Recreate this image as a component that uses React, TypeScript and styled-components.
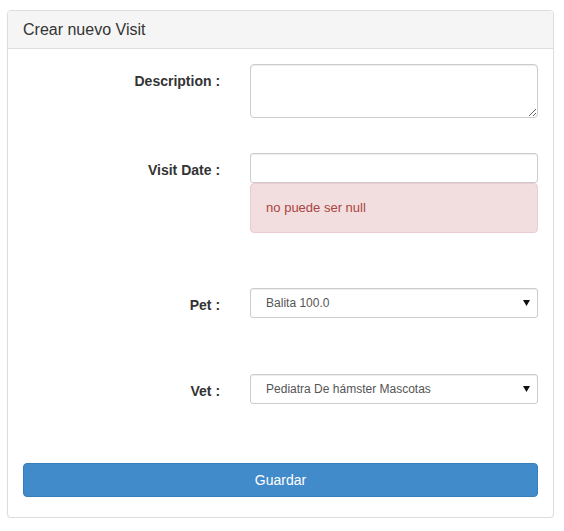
import React from "react";
import styled, { createGlobalStyle } from "styled-components";

const GlobalStyle = createGlobalStyle`
  html, body {
    margin: 0;
    padding: 0;
    background: #ffffff;
  }
  body {
    font-family: "Liberation Sans", Arial, Helvetica, sans-serif;
    font-size: 14px;
    line-height: 1.42857143;
    color: #333333;
  }
  * { box-sizing: border-box; }
`;

const Page = styled.div`
  padding: 10px 0 0 7px;
`;

const Panel = styled.div`
  width: 547px;
  background: #fff;
  border: 1px solid #dddddd;
  border-radius: 4px;
  box-shadow: 0 1px 1px rgba(0, 0, 0, 0.05);
`;

const PanelHeading = styled.div`
  padding: 10px 15px;
  background: #f5f5f5;
  border-bottom: 1px solid #dddddd;
  border-top-left-radius: 3px;
  border-top-right-radius: 3px;
`;

const PanelTitle = styled.h3`
  margin: 0;
  font-size: 16px;
  font-weight: 400;
  line-height: 17px;
  color: #333333;
`;

const PanelBody = styled.form`
  padding: 15px;
`;

const FormRow = styled.div<{ $space: number }>`
  display: grid;
  grid-template-columns: 41.6667% 58.3333%;
  margin: 0 -15px ${(p) => p.$space}px;
`;

const Label = styled.label`
  padding: 7px 15px 0;
  text-align: right;
  font-weight: 700;
  font-size: 14px;
  line-height: 20px;
  color: #333333;
`;

const Control = styled.div`
  padding: 0 15px;
  display: flex;
  flex-direction: column;
`;

const TextArea = styled.textarea`
  display: block;
  width: 100%;
  height: 54px;
  padding: 6px 12px;
  font-family: inherit;
  font-size: 14px;
  line-height: 20px;
  color: #555555;
  background: #fff;
  border: 1px solid #cccccc;
  border-radius: 4px;
  box-shadow: inset 0 1px 1px rgba(0, 0, 0, 0.075);
  resize: vertical;
  outline: none;
`;

const SmallInput = styled.input`
  display: block;
  width: 100%;
  height: 30px;
  padding: 5px 10px;
  font-family: inherit;
  font-size: 12px;
  line-height: 1.5;
  color: #555555;
  background: #fff;
  border: 1px solid #cccccc;
  border-radius: 3px;
  box-shadow: inset 0 1px 1px rgba(0, 0, 0, 0.075);
  outline: none;
`;

const Alert = styled.div`
  height: 50px;
  padding: 15px;
  font-size: 13px;
  line-height: 18px;
  color: #a94442;
  background: #f2dede;
  border: 1px solid #ebccd1;
  border-radius: 4px;
`;

const SelectWrap = styled.div`
  position: relative;
`;

const Select = styled.select`
  display: block;
  width: 100%;
  height: 30px;
  padding: 0 24px 0 15px;
  font-family: inherit;
  font-size: 12px;
  line-height: 28px;
  color: #555555;
  background: #fff;
  border: 1px solid #cccccc;
  border-radius: 3px;
  box-shadow: inset 0 1px 1px rgba(0, 0, 0, 0.075);
  appearance: none;
  -webkit-appearance: none;
  outline: none;
`;

const Caret = styled.svg`
  position: absolute;
  right: 8px;
  top: 12px;
  width: 7px;
  height: 6px;
  pointer-events: none;
`;

const SubmitButton = styled.button`
  display: block;
  width: 100%;
  height: 34px;
  margin-bottom: 5px;
  padding: 6px 12px;
  font-family: inherit;
  font-size: 14px;
  line-height: 20px;
  color: #ffffff;
  background: #428bca;
  border: 1px solid #357ebd;
  border-radius: 4px;
  cursor: pointer;
`;

const SelectField: React.FC<{ value: string }> = ({ value }) => (
  <SelectWrap>
    <Select defaultValue={value}>
      <option value={value}>{value}</option>
    </Select>
    <Caret viewBox="0 0 7 6">
      <polygon points="0,0 7,0 3.5,6" fill="#111" />
    </Caret>
  </SelectWrap>
);

export default function App() {
  return (
    <>
      <GlobalStyle />
      <Page>
        <Panel>
          <PanelHeading>
            <PanelTitle>Crear nuevo Visit</PanelTitle>
          </PanelHeading>
          <PanelBody onSubmit={(e) => e.preventDefault()}>
            <FormRow $space={35}>
              <Label>Description :</Label>
              <Control>
                <TextArea rows={2} />
              </Control>
            </FormRow>
            <FormRow $space={55}>
              <Label>Visit Date :</Label>
              <Control>
                <SmallInput type="text" />
                <Alert>no puede ser null</Alert>
              </Control>
            </FormRow>
            <FormRow $space={56}>
              <Label>Pet :</Label>
              <Control>
                <SelectField value="Balita 100.0" />
              </Control>
            </FormRow>
            <FormRow $space={59}>
              <Label>Vet :</Label>
              <Control>
                <SelectField value="Pediatra De hámster Mascotas" />
              </Control>
            </FormRow>
            <SubmitButton type="submit">Guardar</SubmitButton>
          </PanelBody>
        </Panel>
      </Page>
    </>
  );
}
